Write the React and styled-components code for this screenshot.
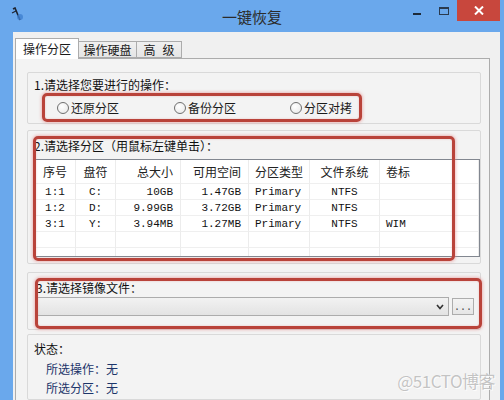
import React from "react";
import styled, { createGlobalStyle } from "styled-components";

const GlobalStyle = createGlobalStyle`
  html, body {
    margin: 0;
    padding: 0;
    background: #6aa8ec;
  }
  * {
    box-sizing: border-box;
  }
`;

const FONT = `"Noto Sans CJK SC", "Liberation Sans", sans-serif`;
const MONO = `"Liberation Mono", "Noto Sans CJK SC", monospace`;

const Window = styled.div`
  position: relative;
  width: 504px;
  height: 400px;
  overflow: hidden;
  display: flex;
  flex-direction: column;
  background: #6aa8ec;
  font-family: ${FONT};
  font-size: 12px;
  color: #1a1a1a;
`;

const TitleBar = styled.div`
  height: 32px;
  flex: none;
  display: grid;
  grid-template-columns: 1fr auto 1fr;
  align-items: start;
`;

const AppIcon = styled.div`
  padding: 7px 0 0 11px;
  svg {
    display: block;
  }
`;

const Title = styled.div`
  padding-top: 8px;
  font-size: 15px;
  line-height: 18px;
  color: #2b2b2b;
`;

const Controls = styled.div`
  display: flex;
  justify-content: flex-end;
  padding-right: 4px;
`;

const CtrlButton = styled.div`
  width: ${({ $w }) => $w}px;
  height: 21px;
  display: flex;
  align-items: center;
  justify-content: center;
  background: ${({ $close }) => ($close ? "#c8473d" : "transparent")};
  color: #fff;
`;

const MinGlyph = styled.div`
  width: 8px;
  height: 2px;
  margin-top: 6px;
  background: #1d2a3a;
`;

const MaxGlyph = styled.div`
  width: 10px;
  height: 8px;
  border: 1px solid #2a3a4e;
  border-top-width: 2px;
`;

const Client = styled.div`
  flex: 1;
  margin: 0 4px 0 13px;
  background: #f0f0f0;
  padding: 6px 10px 0 2px;
  display: flex;
  flex-direction: column;
`;

const Tabs = styled.div`
  height: 20px;
  display: flex;
  align-items: flex-end;
  position: relative;
  z-index: 1;
`;

const Tab = styled.div`
  width: ${({ $w }) => $w}px;
  height: ${({ $active }) => ($active ? 21 : 17)}px;
  margin-bottom: ${({ $active }) => ($active ? -1 : 0)}px;
  margin-left: ${({ $first }) => ($first ? 0 : -1)}px;
  border: 1px solid #acacac;
  border-bottom: ${({ $active }) => ($active ? "none" : "1px solid #acacac")};
  background: ${({ $active }) =>
    $active ? "#ffffff" : "linear-gradient(#f0f0f0, #e5e5e5)"};
  display: flex;
  align-items: center;
  justify-content: center;
  gap: ${({ $spread }) => ($spread ? 7 : 0)}px;
  font-size: 12px;
  line-height: 14px;
  white-space: pre;
`;

const Panel = styled.div`
  flex: 1;
  border: 1px solid #acacac;
  border-bottom: none;
  background: #f3f3f3;
  padding: 13px 8px 0 11px;
  display: flex;
  flex-direction: column;
`;

const Group = styled.div`
  position: relative;
  border: 1px solid #d9d9d9;
  border-radius: 2px;
  margin-top: ${({ $gap }) => $gap || 0}px;
  height: ${({ $h }) => ($h ? `${$h}px` : "auto")};
  padding: ${({ $pad }) => $pad};
  flex: ${({ $grow }) => ($grow ? 1 : "none")};
`;

const Label = styled.div`
  line-height: 14px;
  white-space: nowrap;
  color: ${({ $blue }) => ($blue ? "#1c356a" : "#111")};
  padding-left: ${({ $indent }) => $indent || 0}px;
  margin-top: ${({ $gap }) => $gap || 0}px;
`;

const Highlight = styled.div`
  position: absolute;
  left: ${({ $x }) => $x}px;
  top: ${({ $y }) => $y}px;
  width: ${({ $w }) => $w}px;
  height: ${({ $h }) => $h}px;
  border: 3px solid #b9433a;
  border-radius: 5px;
  box-shadow: 0 0 3px 1px rgba(230, 140, 140, 0.55),
    inset 0 0 2px rgba(230, 140, 140, 0.5);
  pointer-events: none;
  z-index: 2;
`;

const RadioRow = styled.div`
  display: grid;
  grid-template-columns: 117px 116px auto;
  margin-top: 8px;
  padding-left: 23px;
  height: 16px;
  align-items: center;
`;

const Radio = styled.label`
  display: flex;
  align-items: center;
  gap: 2px;
  line-height: 14px;
`;

const RadioDot = styled.span`
  width: 12px;
  height: 12px;
  border-radius: 50%;
  border: 1px solid #6f6f6f;
  background: radial-gradient(circle at 40% 35%, #ffffff, #e6e6e6);
`;

const Table = styled.div`
  margin-top: 6px;
  height: 98px;
  border: 1px solid #828790;
  background: #fff;
  overflow: hidden;
  display: grid;
  grid-template-columns: 41px 40px 65px 68px 61px 70px 1fr;
  grid-auto-rows: 16px;
  grid-template-rows: 24px;
`;

const Cell = styled.div`
  display: flex;
  align-items: center;
  justify-content: ${({ $align }) =>
    $align === "right" ? "flex-end" : $align === "center" ? "center" : "flex-start"};
  padding: 0 ${({ $align }) => ($align === "right" ? 7 : 0)}px 0
    ${({ $align }) => ($align === "left" ? 6 : 0)}px;
  border-right: 1px solid #ececec;
  border-bottom: 1px solid #efefef;
  font-family: ${({ $head }) => ($head ? FONT : MONO)};
  font-size: ${({ $head }) => ($head ? 12 : 11)}px;
  color: ${({ $head }) => ($head ? "#222" : "#111")};
  white-space: pre;
`;

const ComboRow = styled.div`
  display: flex;
  align-items: center;
  gap: 3px;
  margin-top: 2px;
`;

const Combo = styled.div`
  width: 413px;
  height: 19px;
  border: 1px solid #acacac;
  background: linear-gradient(#f2f2f2, #e3e3e3);
  display: flex;
  align-items: center;
  justify-content: flex-end;
  padding-right: 4px;
  svg {
    display: block;
  }
`;

const BrowseButton = styled.div`
  width: 22px;
  height: 17px;
  border: 1px solid #adadad;
  background: linear-gradient(#f3f3f3, #e6e6e6);
  font-family: ${MONO};
  font-size: 10px;
  line-height: 18px;
  text-align: center;
  color: #444;
`;

const Watermark = styled.div`
  position: absolute;
  right: 9px;
  bottom: 7px;
  font-family: ${FONT};
  font-size: 17px;
  letter-spacing: -0.5px;
  color: rgba(170, 170, 170, 0.7);
  text-shadow: 0 0 1px #fff, 1px 1px 0 rgba(255, 255, 255, 0.8);
  z-index: 3;
`;

const columns = [
  { key: "id", title: "序号", align: "center" },
  { key: "drive", title: "盘符", align: "center" },
  { key: "size", title: "总大小", align: "right" },
  { key: "free", title: "可用空间", align: "right" },
  { key: "type", title: "分区类型", align: "left" },
  { key: "fs", title: "文件系统", align: "center" },
  { key: "label", title: "卷标", align: "left" },
];

const rows = [
  { id: "1:1", drive: "C:", size: "10GB", free: "1.47GB", type: "Primary", fs: "NTFS", label: "" },
  { id: "1:2", drive: "D:", size: "9.99GB", free: "3.72GB", type: "Primary", fs: "NTFS", label: "" },
  { id: "3:1", drive: "Y:", size: "3.94MB", free: "1.27MB", type: "Primary", fs: "NTFS", label: "WIM" },
  {},
  {},
];

const App = () => (
  <Window>
    <GlobalStyle />
    <TitleBar>
      <AppIcon>
        <svg width="14" height="16" viewBox="0 0 14 16">
          <path d="M2 2 L4 1 L9 13" stroke="#1e2430" strokeWidth="1.6" fill="none" />
          <circle cx="9" cy="10" r="3" fill="#3f7fd0" opacity="0.8" />
          <path d="M1 6 L5 4" stroke="#1e2430" strokeWidth="1.2" />
        </svg>
      </AppIcon>
      <Title>一键恢复</Title>
      <Controls>
        <CtrlButton $w={26}>
          <MinGlyph />
        </CtrlButton>
        <CtrlButton $w={27}>
          <MaxGlyph />
        </CtrlButton>
        <CtrlButton $w={43} $close>
          <svg width="10" height="9" viewBox="0 0 10 9">
            <path d="M1 0.5 L9 8.5 M9 0.5 L1 8.5" stroke="#fff" strokeWidth="2" />
          </svg>
        </CtrlButton>
      </Controls>
    </TitleBar>

    <Client>
      <Tabs>
        <Tab $w={64} $active $first>操作分区</Tab>
        <Tab $w={59}>操作硬盘</Tab>
        <Tab $w={46} $spread>
          <span>高</span>
          <span>级</span>
        </Tab>
      </Tabs>
      <Panel>
        <Group $h={52} $pad="5px 0 0 6px">
          <Label>1.请选择您要进行的操作：</Label>
          <RadioRow>
            <Radio>
              <RadioDot />
              还原分区
            </Radio>
            <Radio>
              <RadioDot />
              备份分区
            </Radio>
            <Radio>
              <RadioDot />
              分区对拷
            </Radio>
          </RadioRow>
          <Highlight $x={14} $y={20} $w={320} $h={29} />
        </Group>

        <Group $gap={6} $pad="8px 0 6px 6px">
          <Label>2.请选择分区（用鼠标左键单击）：</Label>
          <Table>
            {columns.map((c) => (
              <Cell key={c.key} $head $align={c.align}>
                {c.title}
              </Cell>
            ))}
            {rows.map((r, i) =>
              columns.map((c) => (
                <Cell key={`${i}-${c.key}`} $align={c.align}>
                  {r[c.key] || ""}
                </Cell>
              ))
            )}
          </Table>
          <Highlight $x={5} $y={5} $w={422} $h={125} />
        </Group>

        <Group $gap={8} $h={58} $pad="8px 0 0 8px">
          <Label>3.请选择镜像文件：</Label>
          <ComboRow>
            <Combo>
              <svg width="8" height="6" viewBox="0 0 8 6">
                <path d="M1 1 L4 4.5 L7 1" stroke="#333" strokeWidth="1.6" fill="none" />
              </svg>
            </Combo>
            <BrowseButton>...</BrowseButton>
          </ComboRow>
          <Highlight $x={7} $y={5} $w={447} $h={51} />
        </Group>

        <Group $gap={4} $grow $pad="7px 0 0 6px">
          <Label>状态：</Label>
          <Label $blue $indent={12} $gap={6}>
            所选操作：无
          </Label>
          <Label $blue $indent={12} $gap={5}>
            所选分区：无
          </Label>
        </Group>
      </Panel>
    </Client>
    <Watermark>@51CTO博客</Watermark>
  </Window>
);

export default App;
